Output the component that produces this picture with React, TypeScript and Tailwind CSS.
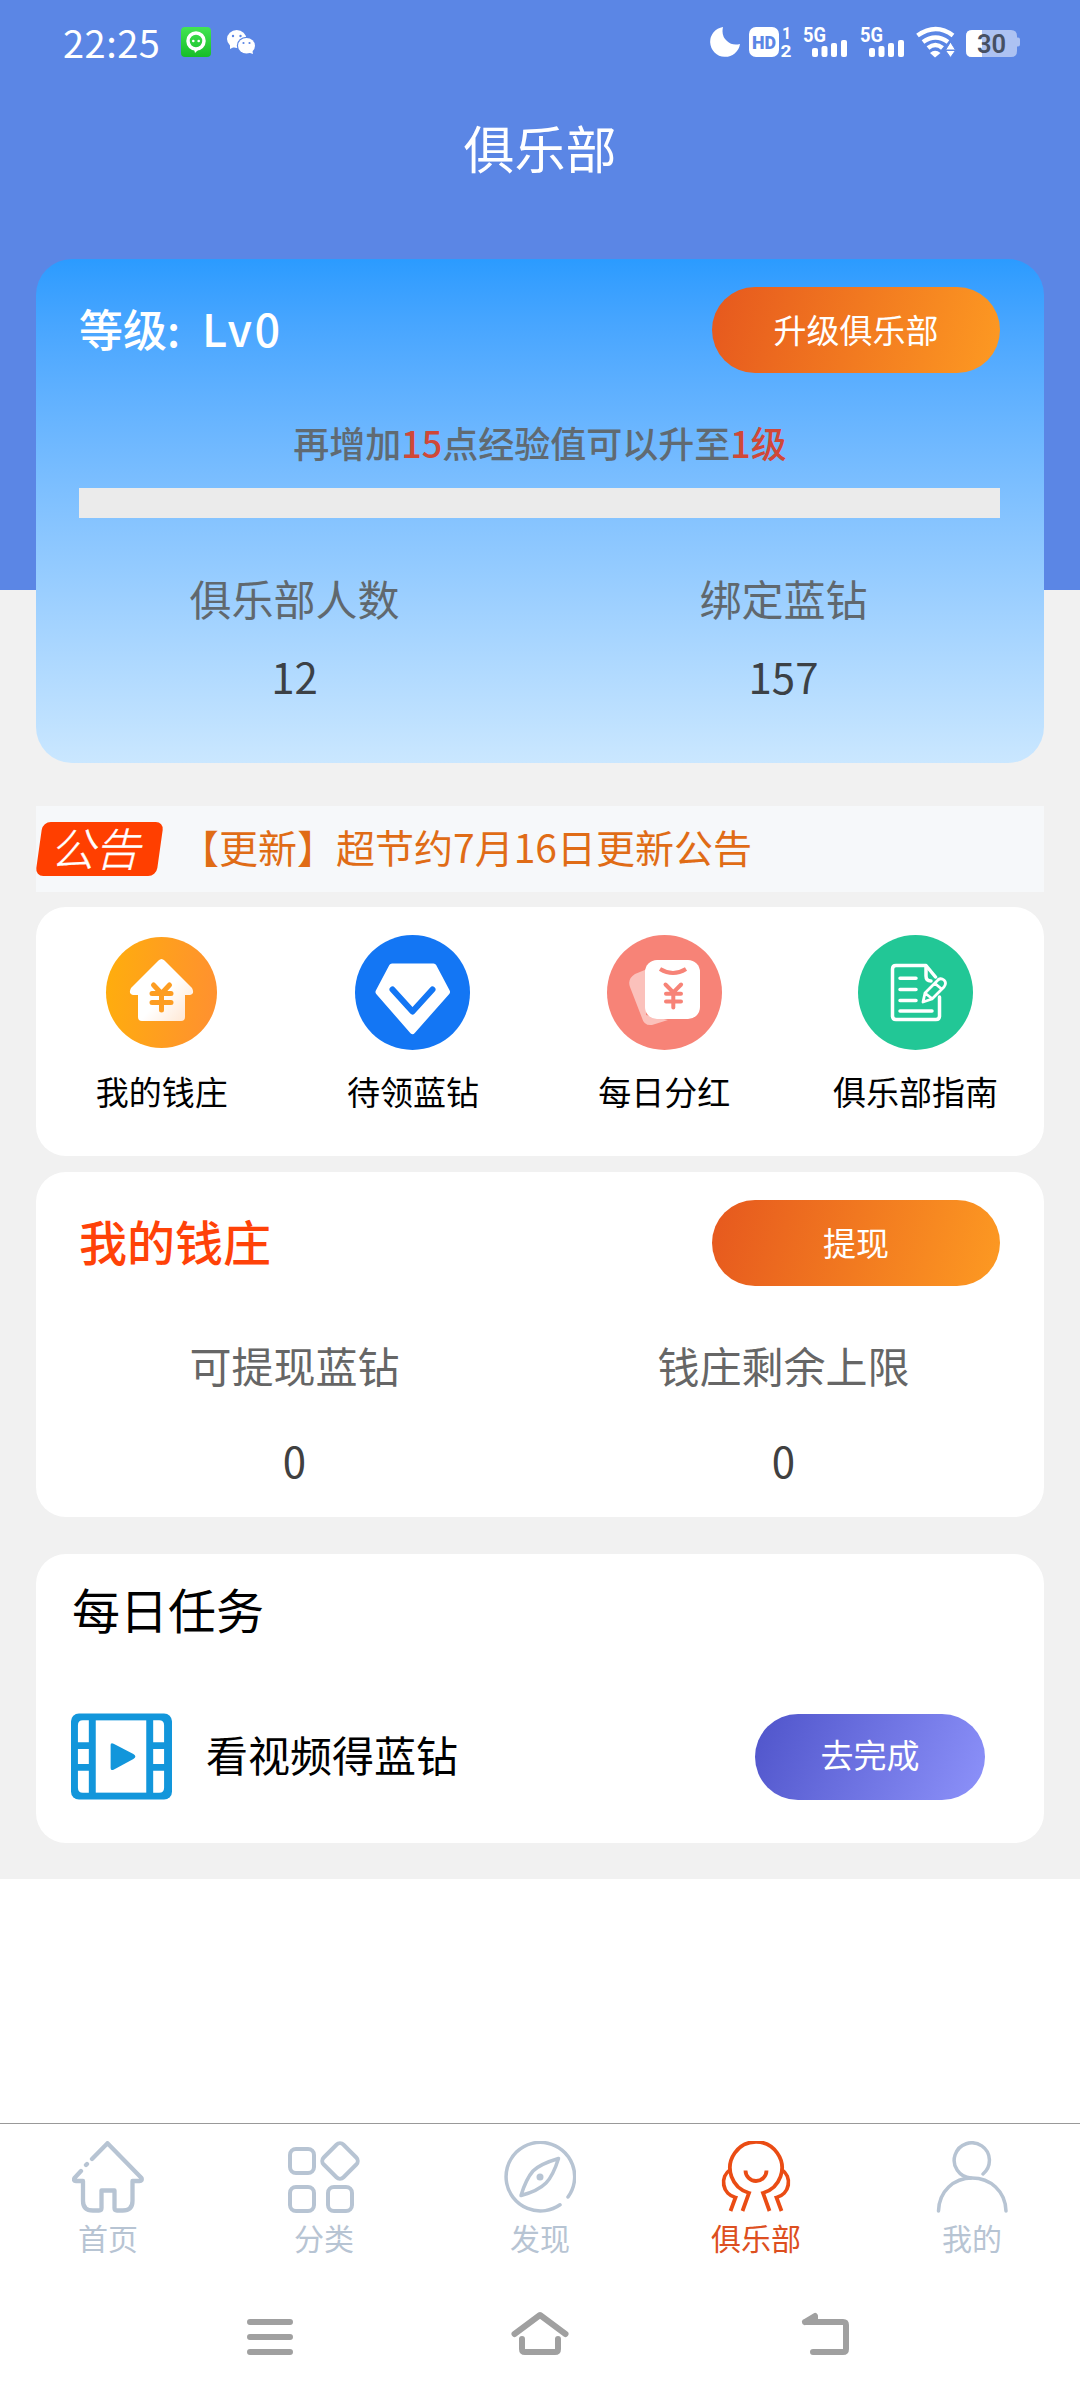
import React from "react";

const quickLinks = [
  { label: "我的钱庄", icon: <BankIcon /> },
  { label: "待领蓝钻", icon: <DiamondIcon /> },
  { label: "每日分红", icon: <BonusIcon /> },
  { label: "俱乐部指南", icon: <GuideIcon /> },
];

const tabs = [
  { label: "首页", icon: <HomeIcon /> },
  { label: "分类", icon: <CategoryIcon /> },
  { label: "发现", icon: <CompassIcon /> },
  { label: "俱乐部", icon: <ClubIcon />, active: true },
  { label: "我的", icon: <MineIcon /> },
];

function BankIcon() {
  return (
    <svg width="115" height="115" viewBox="0 0 115 115" fill="none">
      <defs>
        <linearGradient id="bankBg" x1="0" y1="0" x2="1" y2="0.1">
          <stop offset="0" stopColor="#ffae0c" />
          <stop offset="1" stopColor="#ff922e" />
        </linearGradient>
        <linearGradient id="bankHouse" x1="0.2" y1="0.3" x2="1" y2="1">
          <stop offset="0.4" stopColor="#fff" />
          <stop offset="1" stopColor="#ffe3cc" />
        </linearGradient>
      </defs>
      <circle cx="57.5" cy="57.5" r="55.5" fill="url(#bankBg)" />
      <path
        d="M54.5 25.5q3-3 6 0L88 53q3 6-2 7H81v22q0 4-4 4H38q-4 0-4-4V60h-5q-5-1-2-7z"
        fill="url(#bankHouse)"
      />
      <path
        d="M49.5 50l8 8.5 8-8.5M48 58.5h19M48 67.5h19M57.5 59v16"
        stroke="#fd9d22"
        strokeWidth="5"
        strokeLinecap="round"
      />
    </svg>
  );
}

function DiamondIcon() {
  return (
    <svg width="115" height="115" viewBox="0 0 115 115" fill="none">
      <circle cx="57.5" cy="57.5" r="57.5" fill="#1376f4" />
      <path
        d="M37 31.500h41.500l13.500 25.500-34.500 39-34-39z"
        fill="#fff"
        stroke="#fff"
        strokeWidth="6"
        strokeLinejoin="round"
      />
      <path d="M37.500 54.500l20 22 20-22" stroke="#1376f4" strokeWidth="6" strokeLinecap="round" strokeLinejoin="round" />
    </svg>
  );
}

function BonusIcon() {
  return (
    <svg width="115" height="115" viewBox="0 0 115 115" fill="none">
      <circle cx="57.5" cy="57.5" r="57.5" fill="#f78377" />
      <path d="M39 34.500L28 39Q20 44 23 52L35 83q2 8 10 7L61 85 39 80z" fill="#fbc1bb" />
      <rect x="38" y="25" width="55" height="59" rx="12" fill="#fff" />
      <path d="M53 34q13 8 26 0" stroke="#f78377" strokeWidth="4" />
      <path
        d="M58.500 49.500l7.800 8 7.800-8M59 58.800h15M59 66.500h15M66.300 58v14.500"
        stroke="#f78377"
        strokeWidth="4"
        strokeLinecap="round"
      />
    </svg>
  );
}

function GuideIcon() {
  return (
    <svg width="115" height="115" viewBox="0 0 115 115" fill="none">
      <circle cx="57.5" cy="57.5" r="57.5" fill="#22c796" />
      <g stroke="#fff" strokeWidth="3.500" strokeLinecap="round" strokeLinejoin="round">
        <path d="M81.500 62v19q0 3.500-3.500 3.500H38q-3.500 0-3.500-3.500V34q0-3.500 3.500-3.500h30L77.500 42" />
        <path d="M68 32v9q0 5 5 5" />
        <path d="M42 43.300h16M42 54.500h16M42 65.500h16M42 76h32" />
      </g>
      <path
        d="M65 67l2-9L79 46q3-4 7-1 3 3 0 7L74 64zM67.500 58.500l6.500 5M77 48.500l6 5"
        stroke="#fff"
        strokeWidth="2.800"
        strokeLinejoin="round"
      />
    </svg>
  );
}

function HomeIcon() {
  return (
    <svg width="72" height="72" viewBox="0 0 72 72" fill="none" stroke="#b7c4d3" strokeWidth="4.300" strokeLinecap="round" strokeLinejoin="round">
      <path d="M20 18L35.500 2.200 69.500 37q1 3-2 3H60.500V60q0 9.500-10 9.500H45q-2.500 0-2.500-2.500V49.500H29.500V67q0 2.500-2.500 2.500H21q-10 0-10-9.500V40H4Q1 40 2.500 37L9 30M14 24l1-1" />
    </svg>
  );
}

function CategoryIcon() {
  return (
    <svg width="72" height="72" viewBox="0 0 72 72" fill="none" stroke="#b7c4d3" strokeWidth="4">
      <rect x="2" y="8" width="24" height="24" rx="6" />
      <rect x="2" y="46" width="24" height="24" rx="6" />
      <rect x="40" y="46" width="24" height="24" rx="6" />
      <rect x="38" y="6" width="28" height="28" rx="5" transform="rotate(45 52 20)" />
    </svg>
  );
}

function CompassIcon() {
  return (
    <svg width="72" height="72" viewBox="0 0 72 72" fill="none" stroke="#b7c4d3" strokeWidth="3.500" strokeLinecap="round" strokeLinejoin="round">
      <path d="M64 56A34.300 34.300 0 1 0 56 63.800" />
      <path d="M54.500 17.500Q36 23 29 30 22 38 17 54.500 34 50 42 42 49 35 54.500 17.500z" />
      <circle cx="36" cy="36" r="3.500" fill="#b7c4d3" stroke="none" />
    </svg>
  );
}

function ClubIcon() {
  return (
    <svg width="72" height="72" viewBox="0 0 72 72" fill="none" stroke="#ea4c14" strokeWidth="3.800">
      <path d="M22.500 70l6.500-18A26 26 0 1 1 43 52L49.500 70" />
      <path d="M10.500 28.500A15.500 15.500 0 0 0 15.500 56.500L10.500 70" />
      <path d="M61.500 28.500A15.500 15.500 0 0 1 56.500 56.500L61.500 70" />
      <path d="M25.500 29.500a10.500 10.500 0 0 0 21 0" />
    </svg>
  );
}

function MineIcon() {
  return (
    <svg width="72" height="72" viewBox="0 0 72 72" fill="none" stroke="#b7c4d3" strokeWidth="3.500" strokeLinecap="round">
      <path d="M47 33A17.600 17.600 0 1 0 35 37" />
      <path d="M2.500 70C3 50 18 37 36 37S69.500 50 70 70" />
    </svg>
  );
}

function FilmIcon() {
  return (
    <svg width="101" height="87" viewBox="0 0 102 87" fill="#fff">
      <rect width="102" height="87" rx="8" fill="#1296db" />
      <path d="M12 7h6v22H7V12q0-5 5-5zM7 36h11v15H7zM7 58h11v22h-6q-5 0-5-5z" />
      <path d="M83 7h6q5 0 5 5v17H83zM83 36h11v15H83zM83 58h11v17q0 5-5 5h-6z" />
      <rect x="25" y="7" width="51" height="73" />
      <path d="M40 32q0-3 3-1.500L63 41q4 2.500 0 5L43 57q-3 1-3-2z" fill="#1296db" />
    </svg>
  );
}

function Signal() {
  return (
    <svg className="overflow-visible" width="45" height="32" viewBox="0 0 45 32" fill="#fff">
      <text x="0" y="15.500" fontSize="20" fontWeight="700" fontFamily="Roboto, sans-serif" textLength="23" lengthAdjust="spacingAndGlyphs">
        5G
      </text>
      <rect x="9" y="22" width="6" height="9" rx="2" />
      <rect x="18.500" y="20" width="6" height="11" rx="2" />
      <rect x="28" y="17" width="6" height="14" rx="2" />
      <rect x="38" y="14" width="6" height="17" rx="2" />
    </svg>
  );
}

function StatusBar() {
  return (
    <div className="h-[86px] flex items-start pt-[26px] pl-[63px] text-white">
      <div className="w-[118px] text-[38px] leading-[32px] tracking-[0.5px] whitespace-nowrap">22:25</div>
      <svg width="31" height="32" viewBox="0 0 31 32">
        <defs>
          <linearGradient id="chatBg" x1="0" y1="0" x2="0" y2="1">
            <stop offset="0" stopColor="#42e553" />
            <stop offset="1" stopColor="#17bd28" />
          </linearGradient>
        </defs>
        <rect y="1" width="30" height="30" rx="4" fill="url(#chatBg)" />
        <circle cx="15" cy="15" r="8" fill="none" stroke="#fff" strokeWidth="3.500" />
        <path d="M13 23h5l-4 4z" fill="#fff" />
        <circle cx="12.300" cy="15" r="1.300" fill="#fff" />
        <circle cx="17.700" cy="15" r="1.300" fill="#fff" />
      </svg>
      <svg className="ml-[15px]" width="29" height="32" viewBox="0 0 29 32" fill="#fff">
        <ellipse cx="9.700" cy="13" rx="9.700" ry="9" />
        <path d="M3 18v5l6-3z" />
        <g fill="#5b86e5">
          <ellipse cx="19.500" cy="19.700" rx="9.700" ry="9" />
          <circle cx="6" cy="10" r="1.200" />
          <circle cx="13.500" cy="10" r="1.200" />
        </g>
        <ellipse cx="19.500" cy="19.700" rx="8.500" ry="7.800" />
        <path d="M20 26l6 2-1-5z" />
        <circle cx="16.500" cy="17" r="1.100" fill="#5b86e5" />
        <circle cx="22.500" cy="17" r="1.100" fill="#5b86e5" />
      </svg>
      <div className="ml-auto mr-[59px] flex">
        <svg width="31" height="32" viewBox="0 0 31 32" fill="#fff">
          <path d="M13 1A15 15 0 1 0 30 18Q22 20 17 15 11 10 13 1z" />
        </svg>
        <svg className="ml-[8px] overflow-visible" width="43" height="32" viewBox="0 0 43 32" fill="#fff" fontFamily="Roboto, sans-serif" fontWeight="700">
          <rect y="1" width="30" height="30" rx="7" />
          <text x="3" y="23" fontSize="19" fontWeight="900" fill="#5b86e5" textLength="24" lengthAdjust="spacingAndGlyphs">
            HD
          </text>
          <text x="33" y="13" fontSize="16">1</text>
          <text x="31.500" y="31" fontSize="17" textLength="11" lengthAdjust="spacingAndGlyphs">2</text>
        </svg>
        <div className="ml-[11px]"><Signal /></div>
        <div className="ml-[12px]"><Signal /></div>
        <svg className="ml-[11px]" width="40" height="32" viewBox="0 0 40 32" fill="none" stroke="#fff" strokeWidth="4.500">
          <path d="M1.500 9.500Q20-3.500 37 9.500M7 16q12.500-9 25 0M12 22q7.500-6 14.500 0" />
          <path d="M14 27q5-4.500 10.500 0L19 31.500z" fill="#fff" stroke="none" />
          <path d="M29.500 24l5-8 5 8zM29.500 24.500h10l-5 7z" fill="#fff" stroke="#5b86e5" strokeWidth="1" />
        </svg>
        <svg className="ml-[10px]" width="55" height="32" viewBox="0 0 55 32">
          <path d="M6 4h39q6 0 6 6v1.500h1q2 0 2 2v5q0 2-2 2h-1V25q0 6-6 6H6q-6 0-6-6V10q0-6 6-6z" fill="#adc2f2" />
          <path d="M6 4h10v27H6q-6 0-6-6V10q0-6 6-6z" fill="#fff" />
          <text x="25.500" y="26.500" fontSize="25.500" fontWeight="600" fontFamily="Roboto, sans-serif" fill="#465063" textAnchor="middle">
            30
          </text>
        </svg>
      </div>
    </div>
  );
}

const App = () => {
  return (
    <div
      className="w-[1080px] h-[2400px] flex flex-col bg-white overflow-hidden font-['Noto_Sans_CJK_SC','Noto_Sans',sans-serif]"
      lang="zh-CN"
    >
      <div className="h-[1879px] px-9 bg-[linear-gradient(#5b86e5_590px,#f1f1f1_590px)]">
        <div className="-mx-9">
          <StatusBar />
        </div>
        <h1 className="h-[173px] pt-[29px] text-center text-[51px] leading-[64px] text-white">俱乐部</h1>

        {/* level card */}
        <div className="h-[504px] rounded-[36px] pt-7 bg-linear-to-b from-[#2b9bff] to-[#cae7ff]">
          <div className="flex justify-between items-center pl-[43px] pr-11">
            <div className="flex items-baseline pb-[5px] text-[44px] leading-[60px] font-medium text-white">
              <span className="w-[123px] whitespace-nowrap">等级:</span>
              <span className="text-[45px] tracking-[2.5px]">Lv0</span>
            </div>
            <button className="w-[288px] h-[86px] rounded-full bg-[linear-gradient(105deg,#e6581e,#fd9a22)] text-[33px] text-white">
              升级俱乐部
            </button>
          </div>
          <p className="mt-[43px] text-center text-[36px] leading-[52px] font-medium text-[#606a72]">
            再增加<span className="text-[#d04838]">15</span>点经验值可以升至
            <span className="text-[#d04838]">1级</span>
          </p>
          <div className="mt-[20px] ml-[43px] w-[921px] h-[30px] bg-[#ebebeb]" />
          <div className="mt-[50px] pl-[14px] pr-4 grid grid-cols-2 text-center text-[42px] leading-[60px]">
            <div className="text-[#60686e]">俱乐部人数</div>
            <div className="text-[#60686e]">绑定蓝钻</div>
            <div className="mt-[18px] text-[#3c4146]">12</div>
            <div className="mt-[18px] text-[#3c4146]">157</div>
          </div>
        </div>

        {/* notice */}
        <div className="mt-[43px] h-[86px] bg-[#f6f8fa] flex items-center">
          <div className="ml-[3px] w-[121px] h-[54px] rounded-lg bg-[#ff3f00] -skew-x-[8deg] flex items-center justify-center text-[45px] leading-[54px] font-light text-white">
            <span className="-skew-x-[6deg] pb-[5px] [-webkit-text-stroke:0.4px_white]">公告</span>
          </div>
          <span className="ml-[20px] text-[39px] leading-[60px] pb-[7px] text-[#e06c16] whitespace-nowrap">【更新】超节约7月16日更新公告</span>
        </div>

        {/* quick links */}
        <div className="mt-[15px] h-[249px] rounded-[30px] bg-white grid grid-cols-4 pt-7 pr-[3px]">
          {quickLinks.map((item) => (
            <div key={item.label} className="flex flex-col items-center">
              {item.icon}
              <span className="mt-[16px] text-[33px] leading-[50px] text-black whitespace-nowrap">{item.label}</span>
            </div>
          ))}
        </div>

        {/* bank */}
        <div className="mt-4 h-[345px] rounded-[30px] bg-white pt-7">
          <div className="flex justify-between items-center pl-[43px] pr-11">
            <h2 className="text-[48px] leading-[60px] pb-[7px] font-medium text-[#ff4208]">我的钱庄</h2>
            <button className="w-[288px] h-[86px] rounded-full bg-[linear-gradient(105deg,#e6581e,#fd9a22)] text-[33px] pb-[1px] text-white">
              提现
            </button>
          </div>
          <div className="mt-[49px] pl-[14px] pr-4 grid grid-cols-2 text-center text-[42px] leading-[60px]">
            <div className="text-[#666]">可提现蓝钻</div>
            <div className="text-[#666]">钱庄剩余上限</div>
            <div className="mt-[35px] text-[#404040]">0</div>
            <div className="mt-[35px] text-[#404040]">0</div>
          </div>
        </div>

        {/* daily tasks */}
        <div className="mt-[37px] h-[289px] rounded-[30px] bg-white pt-[24px]">
          <h2 className="pl-[36px] text-[48px] leading-[60px] text-black">每日任务</h2>
          <div className="mt-[75px] flex items-center pl-[35px] pr-[59px]">
            <FilmIcon />
            <span className="ml-[34px] text-[42px] leading-[60px] pb-[5px] text-black">看视频得蓝钻</span>
            <button className="ml-auto w-[230px] h-[86px] rounded-full bg-[linear-gradient(115deg,#4f54ca,#8d92fa)] text-[33px] pb-[4px] text-white">
              去完成
            </button>
          </div>
        </div>
      </div>

      {/* tab bar */}
      <div className="mt-[244px] h-[150px] border-t border-[#999] grid grid-cols-5 pt-[17px]">
        {tabs.map((tab) => (
          <div key={tab.label} className="flex flex-col items-center">
            {tab.icon}
            <span
              className={
                tab.active
                  ? "mt-[4px] text-[30px] leading-[40px] text-[#dd4f20]"
                  : "mt-[4px] text-[30px] leading-[40px] text-[#b7c4d3]"
              }
            >
              {tab.label}
            </span>
          </div>
        ))}
      </div>

      {/* system navigation */}
      <div className="mt-[33px] flex pl-[247px]">
        <svg width="46" height="52" viewBox="0 0 46 52" stroke="#a0a0a0" strokeWidth="6" strokeLinecap="round">
          <path d="M3 16h40M3 31h40M3 46h40" />
        </svg>
        <svg className="ml-[218px]" width="58" height="52" viewBox="0 0 58 52" fill="none" stroke="#a0a0a0" strokeWidth="6" strokeLinecap="round" strokeLinejoin="round">
          <path d="M3.500 28L29 9l25.500 19M11 33v10q0 3 3 3h30q3 0 3-3V33" />
        </svg>
        <svg className="ml-[232px]" width="50" height="52" viewBox="0 0 50 52" fill="none" stroke="#a0a0a0" strokeWidth="6" strokeLinecap="round" strokeLinejoin="round">
          <path d="M4 16h38q3 0 3 3v24q0 3-3 3H12M4 16L14 10v5" />
        </svg>
      </div>
    </div>
  );
};
export default App;
